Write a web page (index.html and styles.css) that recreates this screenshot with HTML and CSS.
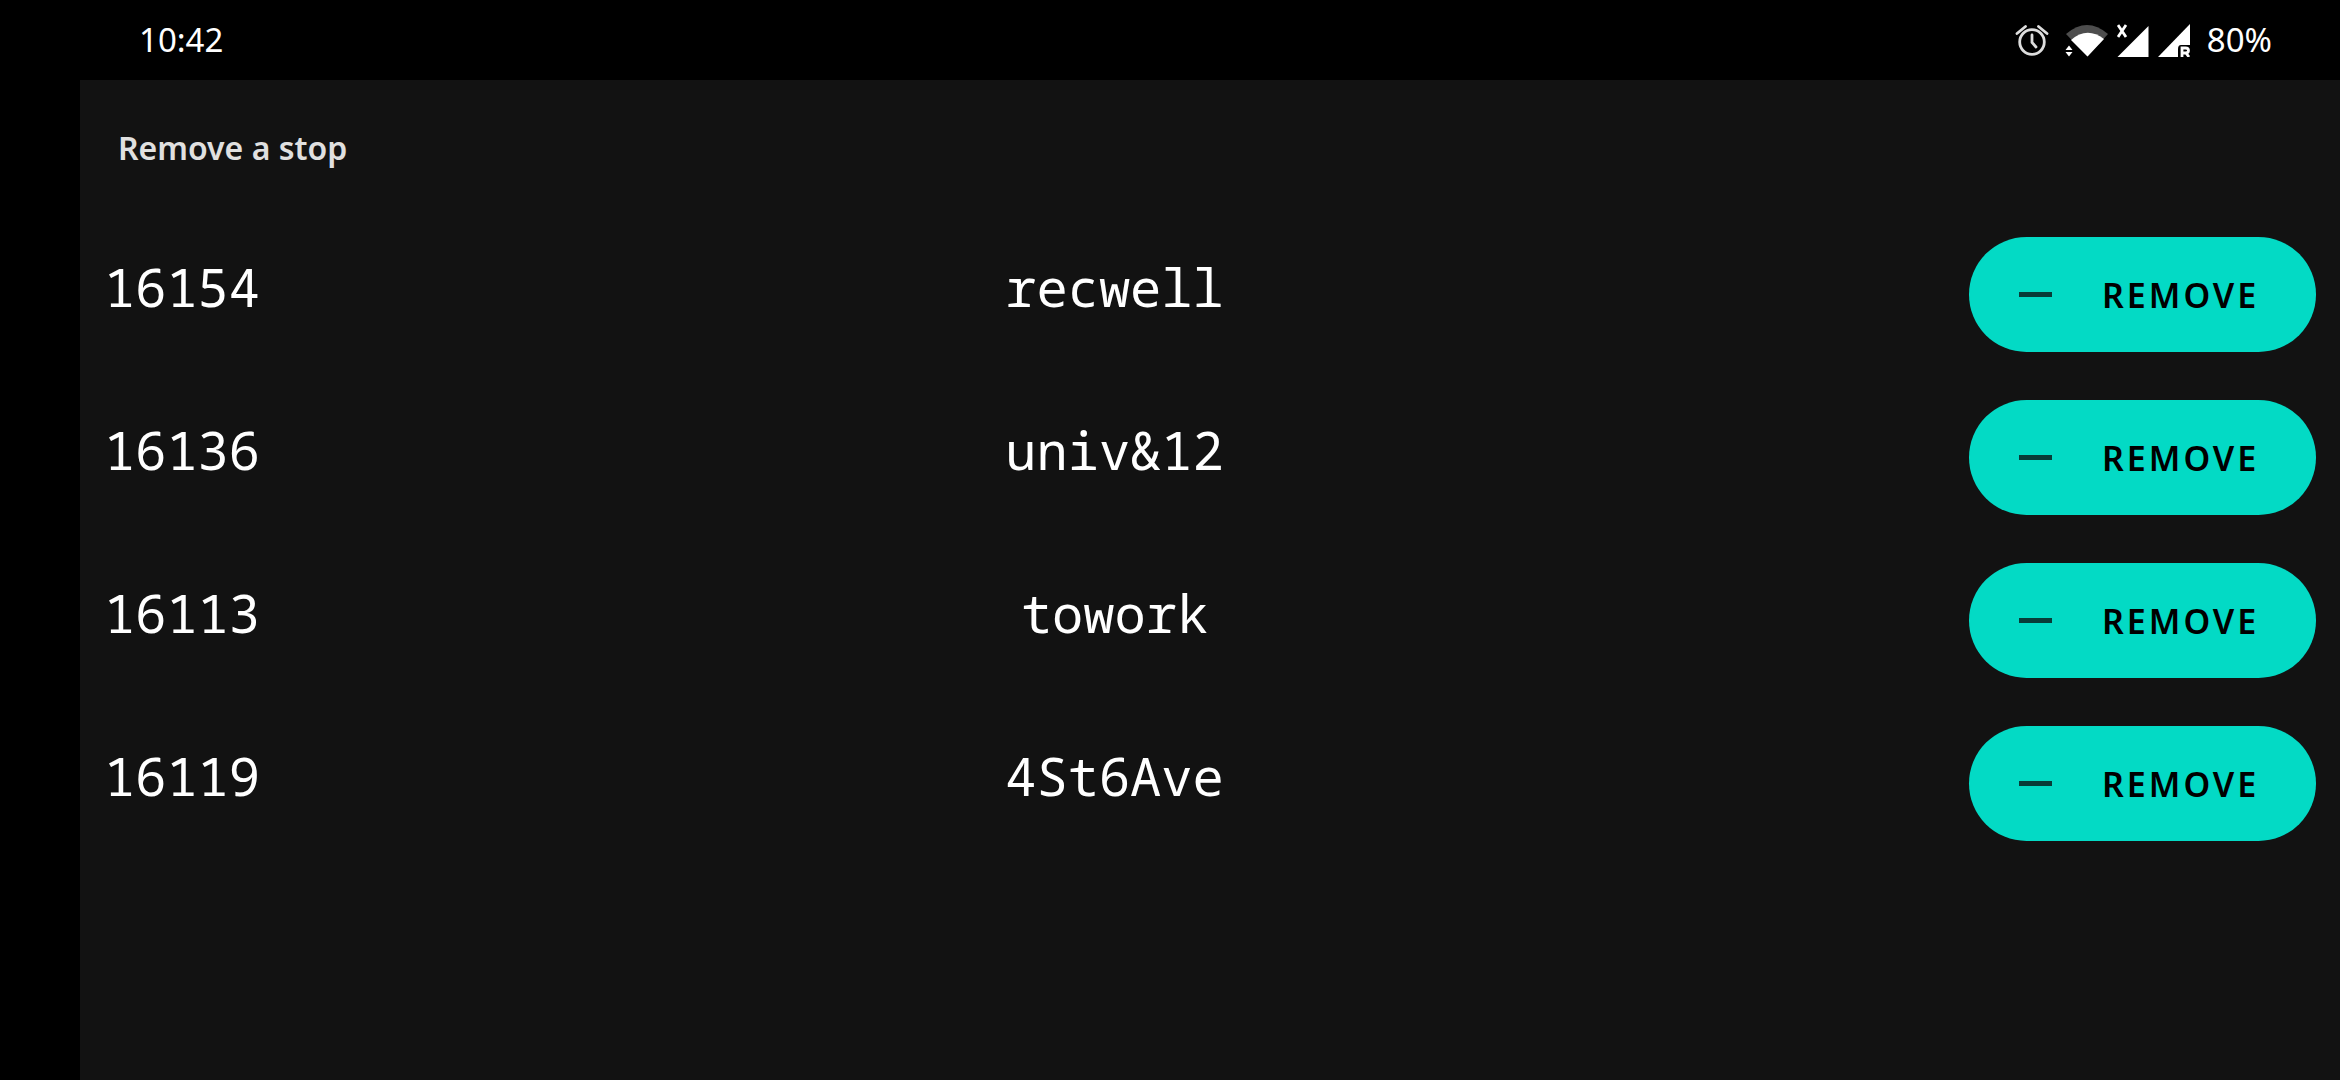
FILE: index.html
```
<!DOCTYPE html>
<html lang="en">
<head>
<meta charset="utf-8">
<title>Remove a stop</title>
<link rel="stylesheet" href="styles.css">
</head>
<body>
<header class="status">
  <time class="clock">10:42</time>
  <div class="indicators">
    <svg class="icon alarm" viewBox="0 0 34 36" aria-hidden="true"><g fill="none" stroke="#ddd" stroke-width="2.800" stroke-linecap="round"><circle cx="17" cy="21" r="12.300"/><path d="M17 14v7.500l4 4.500M2 12.500L10.500 5.500M32 12.500L23.500 5.500"/></g></svg>
    <svg class="icon wifi" viewBox="0 0 44 36" aria-hidden="true"><path fill="#4d4d4d" d="M1 13Q22-5 43 13L22.500 35.500Z"/><path fill="#fff" d="M6 19Q22 5 39 18L22.500 35.500Z"/><path fill="#fff" d="M.5 29L4 24.500l3.500 4.500ZM.5 31L4 35.500l3.500-4.500Z"/></svg>
    <svg class="icon signal" viewBox="0 0 32 36" aria-hidden="true"><path fill="#fff" d="M31.500 5V36H.5Z"/><path fill="none" stroke="#fff" stroke-width="2.800" d="M1 4L9 16M9 4L1 16"/></svg>
    <svg class="icon roaming" viewBox="0 0 34 36" aria-hidden="true"><path fill="#fff" d="M33 3V36H1Z"/><path fill="#000" d="M21 28Q21 24 24 24H34V36H21Z"/><path fill="none" stroke="#fff" stroke-width="2.800" d="M25 36V27h3.500q3 0 3 2.500t-3 2.500H25M29 32l3 4"/></svg>
    <span class="battery">80%</span>
  </div>
</header>
<main class="screen">
  <h1 class="title">Remove a stop</h1>
  <ul class="stops">
    <li class="stop"><span class="code">16154</span><span class="name">recwell</span><button class="remove" type="button"><span class="minus"></span>REMOVE</button></li>
    <li class="stop"><span class="code">16136</span><span class="name">univ&amp;12</span><button class="remove" type="button"><span class="minus"></span>REMOVE</button></li>
    <li class="stop"><span class="code">16113</span><span class="name">towork</span><button class="remove" type="button"><span class="minus"></span>REMOVE</button></li>
    <li class="stop"><span class="code">16119</span><span class="name">4St6Ave</span><button class="remove" type="button"><span class="minus"></span>REMOVE</button></li>
  </ul>
</main>
</body>
</html>
```
FILE: styles.css
```
* { box-sizing: border-box; }
body { margin: 0; min-height: 100vh; display: flex; flex-direction: column; background: #000; color: #fff; font-family: "Noto Sans", sans-serif; }
.status { height: 80px; padding: 0 68px 2px 139px; display: flex; align-items: center; justify-content: space-between; font-size: 33px; }
.indicators { display: flex; align-items: center; gap: 8px; }
.icon { height: 36px; }
.alarm { width: 34px; margin-right: 8px; }
.wifi { width: 44px; }
.signal { width: 32px; }
.roaming { width: 34px; }
.battery { margin-left: 8px; }
.screen { flex: 1; margin-left: 80px; padding: 44px 24px 0; background: #121212; }
.title { margin: 0; padding-left: 14px; font-size: 32px; line-height: 48px; font-weight: 600; color: #e0e0e0; }
.stops { margin: 65px 0 0; padding: 0; list-style: none; display: grid; gap: 48px; }
.stop { display: flex; justify-content: space-between; align-items: center; line-height: 60px; font-family: "Noto Sans Mono", "DejaVu Sans Mono", monospace; font-size: 52px; }
.code, .name { padding-bottom: 16px; }
.remove { height: 115px; width: 347px; padding: 0 50px; border: 0; border-radius: 58px; background: #03dac5; color: #000; display: flex; align-items: center; gap: 50px; font: 600 34px "Noto Sans", sans-serif; letter-spacing: 3px; }
.minus { width: 33px; height: 5px; background: #083c38; }
```
